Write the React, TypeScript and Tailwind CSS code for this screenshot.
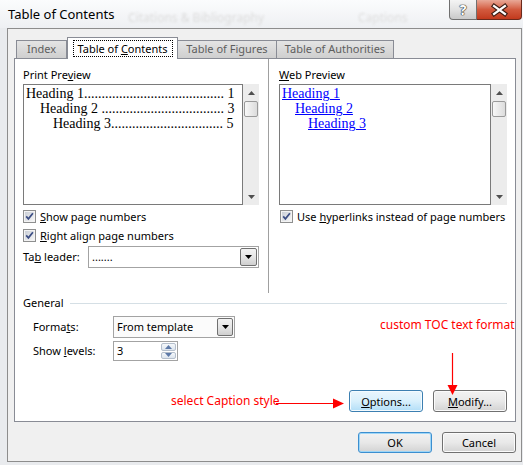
import React from "react";

const ui = "font-['Noto_Sans',sans-serif]";
const serif = "font-['Liberation_Serif',serif]";

function Check() {
  return (
    <svg width="13" height="13" viewBox="0 0 13 13" className="shrink-0">
      <defs>
        <linearGradient id="cbfill" x1="0" y1="0" x2="1" y2="1">
          <stop offset="0" stopColor="#c9ced6" />
          <stop offset="1" stopColor="#f6f6f6" />
        </linearGradient>
      </defs>
      <rect x="0.5" y="0.5" width="12" height="12" fill="#f3f3f3" stroke="#8e8f8f" />
      <rect x="2" y="2" width="9" height="9" fill="url(#cbfill)" />
      <path d="M3.2 6.4 L5.4 8.9 L9.9 3.2" fill="none" stroke="#3b4d84" strokeWidth="1.7" />
    </svg>
  );
}

function TriDown({ color = "#000" }: { color?: string }) {
  return (
    <svg width="7" height="4" viewBox="0 0 7 4">
      <path d="M0 0 L7 0 L3.5 4Z" fill={color} />
    </svg>
  );
}

function TriUp({ color = "#000" }: { color?: string }) {
  return (
    <svg width="7" height="4" viewBox="0 0 7 4">
      <path d="M3.5 0 L7 4 L0 4Z" fill={color} />
    </svg>
  );
}

function VScroll() {
  return (
    <div className="w-[16px] h-full bg-[#ececec] flex flex-col items-center">
      <div className="h-[17px] flex items-center justify-center">
        <TriUp color="#505050" />
      </div>
      <div className="w-[14px] h-[16px] rounded-[2px] border border-[#9a9a9a] bg-gradient-to-r from-[#f8f8f8] to-[#dcdcdc]" />
      <div className="flex-1" />
      <div className="h-[17px] flex items-center justify-center">
        <TriDown color="#505050" />
      </div>
    </div>
  );
}

function ArrowBtn({ w }: { w: string }) {
  return (
    <div
      className={`${w} h-full rounded-[2px] border border-[#707070] bg-gradient-to-b from-[#f3f3f3] via-[#e6e6e6] to-[#cfcfcf] flex items-center justify-center`}
    >
      <TriDown />
    </div>
  );
}

function Btn({
  children,
  kind = "normal",
  h = "h-[22px]",
}: {
  children: React.ReactNode;
  kind?: "normal" | "hot" | "default";
  h?: string;
}) {
  const look =
    kind === "hot"
      ? "border-[#3c7fb1] bg-gradient-to-b from-[#eaf6fd] via-[#d9f0fc] to-[#b2def7] shadow-[inset_0_0_0_1px_#f4fbff]"
      : kind === "default"
      ? "border-[#3c8fd0] bg-gradient-to-b from-[#f2f2f2] via-[#e8e8e8] to-[#d3d3d3] shadow-[inset_0_0_0_1px_#9ed6f7]"
      : "border-[#707070] bg-gradient-to-b from-[#f2f2f2] via-[#e9e9e9] to-[#d3d3d3] shadow-[inset_0_0_0_1px_#fbfbfb]";
  return (
    <div
      className={`w-[74px] ${h} rounded-[3px] border ${look} flex items-center justify-center text-[11px] leading-none`}
    >
      {children}
    </div>
  );
}

export default function App() {
  return (
    <div className={`relative w-[523px] h-[465px] overflow-hidden bg-[#e9ebee] text-black text-[11px] ${ui}`}>
      {/* title bar */}
      <div className="relative h-[28px] bg-gradient-to-b from-[#fbfcfd] to-[#eef0f3] flex">
        <div className="absolute left-[128px] top-[9px] text-[12px] text-[#dcdcdc] blur-[1px]">
          Citations &amp; Bibliography
        </div>
        <div className="absolute left-[358px] top-[9px] text-[12px] text-[#dedede] blur-[1px]">Captions</div>
        <span className="relative pl-[8px] pt-[5px] text-[13px] leading-[18px]">Table of Contents</span>
        <div className="ml-auto mr-[1px] flex h-[20px]">
          <div className="w-[28px] h-full rounded-bl-[4px] border border-t-0 border-[#707070] bg-gradient-to-b from-[#f4f4f4] via-[#e2e2e2] to-[#c9c9c9] flex items-center justify-center">
            <span className="text-[14px] font-bold leading-none text-white [text-shadow:0_0_1px_#222,0_0_1px_#222,0_0_1px_#222]">
              ?
            </span>
          </div>
          <div className="w-[45px] h-full rounded-br-[4px] border border-t-0 border-l-0 border-[#6b2a1c] bg-gradient-to-b from-[#e8a897] via-[#d25a3e] to-[#c2391c] flex items-center justify-center">
            <svg width="45" height="20" viewBox="0 0 45 20">
              <path d="M17.5 6 L28.5 14 M28.5 6 L17.5 14" stroke="#3b1b12" strokeWidth="4.6" strokeLinecap="square" />
              <path d="M17.5 6 L28.5 14 M28.5 6 L17.5 14" stroke="#ffffff" strokeWidth="2.4" strokeLinecap="square" />
            </svg>
          </div>
        </div>
      </div>

      {/* dialog body */}
      <div className="ml-[7px] w-[515px] h-[434px] border border-[#8d8d8d] bg-[#f0f0f0] pl-[6px] pr-[5px] pt-[8px]">
        {/* tabs */}
        <div className="h-[21px] flex items-end pl-[2px]">
          <div className="w-[51px] h-[18px] border border-b-0 border-[#898c95] bg-gradient-to-b from-[#e4e4e4] to-[#cfcfcf] text-[#5e5e5e] flex items-center justify-center">
            Index
          </div>
          <div className="relative z-10 -mb-[1px] w-[111px] h-[22px] border border-b-0 border-[#898c95] bg-white flex items-center justify-center">
            <span className="px-[4px] py-[1px] border border-dotted border-black leading-[13px]">
              Table of <span className="underline">C</span>ontents
            </span>
          </div>
          <div className="w-[99px] h-[18px] border border-b-0 border-l-0 border-[#898c95] bg-gradient-to-b from-[#e4e4e4] to-[#cfcfcf] text-[#5e5e5e] flex items-center justify-center">
            Table of Figures
          </div>
          <div className="w-[117px] h-[18px] border border-b-0 border-l-0 border-[#898c95] bg-gradient-to-b from-[#e4e4e4] to-[#cfcfcf] text-[#5e5e5e] flex items-center justify-center">
            Table of Authorities
          </div>
        </div>

        {/* panel */}
        <div className="w-[502px] h-[364px] border border-[#898c95] bg-white flex flex-col pl-[8px] pr-[8px]">
          {/* previews */}
          <div className="h-[234px] flex">
            <div className="w-[236px] pt-[8px] flex flex-col">
              <div className="h-[16px] leading-[16px] mb-[1px]">
                Print Pre<span className="underline">v</span>iew
              </div>
              <div className="h-[121px] flex">
                <div className={`w-[220px] h-full border border-[#7a7a7a] pl-[2px] pt-[1px] text-[14px] leading-[15px] whitespace-nowrap ${serif}`}>
                  <div>Heading 1........................................ 1</div>
                  <div className="pl-[14px]">Heading 2 ................................... 3</div>
                  <div className="pl-[27px]">Heading 3................................ 5</div>
                </div>
                <VScroll />
              </div>
              <div className="mt-[5px] h-[13px] flex items-center gap-[4px] leading-[13px]">
                <Check />
                <span>
                  <span className="underline">S</span>how page numbers
                </span>
              </div>
              <div className="mt-[6px] h-[13px] flex items-center gap-[4px] leading-[13px]">
                <Check />
                <span>
                  <span className="underline">R</span>ight align page numbers
                </span>
              </div>
              <div className="mt-[4px] h-[22px] flex items-center">
                <span className="w-[65px]">
                  Ta<span className="underline">b</span> leader:
                </span>
                <div className="w-[171px] h-full border border-[#a3a3a3] bg-white flex items-center p-[1px] pl-[3px]">
                  <span className="flex-1">.......</span>
                  <ArrowBtn w="w-[17px]" />
                </div>
              </div>
            </div>

            <div className="ml-[9px] w-px h-full bg-[#a0a0a0]" />

            <div className="ml-[10px] w-[228px] pt-[8px] flex flex-col">
              <div className="h-[16px] leading-[16px] mb-[1px]">
                <span className="underline">W</span>eb Preview
              </div>
              <div className="h-[121px] flex">
                <div className={`w-[212px] h-full border border-[#7a7a7a] pl-[2px] pt-[1px] text-[14px] leading-[15px] text-[#0000ff] ${serif}`}>
                  <div>
                    <span className="underline">Heading 1</span>
                  </div>
                  <div className="pl-[13px]">
                    <span className="underline">Heading 2</span>
                  </div>
                  <div className="pl-[26px]">
                    <span className="underline">Heading 3</span>
                  </div>
                </div>
                <VScroll />
              </div>
              <div className="mt-[5px] h-[13px] flex items-center gap-[4px] leading-[13px] pl-[1px]">
                <Check />
                <span>
                  Use <span className="underline">h</span>yperlinks instead of page numbers
                </span>
              </div>
            </div>
          </div>

          {/* general */}
          <div className="h-[20px] flex items-center">
            <span>General</span>
            <div className="ml-[6px] flex-1 h-px bg-[#d5dfe5]" />
          </div>
          <div className="mt-[3px] h-[22px] flex items-center pl-[10px]">
            <span className="w-[80px]">
              Forma<span className="underline">t</span>s:
            </span>
            <div className="w-[122px] h-full border border-[#a3a3a3] bg-[#fbfbfb] flex items-center p-[1px] pl-[3px]">
              <span className="flex-1">From template</span>
              <ArrowBtn w="w-[16px]" />
            </div>
          </div>
          <div className="mt-[3px] h-[20px] flex items-center pl-[10px]">
            <span className="w-[80px]">
              Show <span className="underline">l</span>evels:
            </span>
            <div className="w-[65px] h-full border border-[#a3a3a3] bg-white flex items-center pl-[3px]">
              <span className="flex-1">3</span>
              <div className="w-[16px] h-full flex flex-col p-[1px] pl-0 gap-px">
                <div className="flex-1 rounded-[2px] border border-[#b5bfcc] bg-gradient-to-b from-[#f5f8fb] to-[#dde5ee] flex items-center justify-center">
                  <TriUp color="#5d79a8" />
                </div>
                <div className="flex-1 rounded-[2px] border border-[#b5bfcc] bg-gradient-to-b from-[#f5f8fb] to-[#dde5ee] flex items-center justify-center">
                  <TriDown color="#5d79a8" />
                </div>
              </div>
            </div>
          </div>

          <div className="mt-[29px] flex justify-end gap-[10px]">
            <Btn kind="hot">
              <span>
                <span className="underline">O</span>ptions...
              </span>
            </Btn>
            <Btn>
              <span>
                <span className="underline">M</span>odify...
              </span>
            </Btn>
          </div>
        </div>

        {/* OK / Cancel */}
        <div className="mt-[10px] flex justify-end gap-[10px]">
          <Btn kind="default" h="h-[21px]">OK</Btn>
          <Btn h="h-[21px]">Cancel</Btn>
        </div>
      </div>

      {/* red annotations */}
      <div className="absolute left-[380px] top-[318px] text-[12px] leading-[14px] text-[#ff0000] whitespace-nowrap">
        custom TOC text format
      </div>
      <div className="absolute left-[171px] top-[394px] text-[12px] leading-[14px] text-[#ff0000] whitespace-nowrap">
        select Caption style
      </div>
      <svg className="absolute left-0 top-0 pointer-events-none" width="523" height="465" viewBox="0 0 523 465">
        <path d="M276 403.5 L336 403.5" stroke="#ff0000" strokeWidth="1.2" />
        <path d="M333 398.5 L344 403.5 L333 408.5Z" fill="#ff0000" />
        <path d="M452.5 353 L452.5 387" stroke="#ff0000" strokeWidth="1.2" />
        <path d="M447.5 385 L457.5 385 L452.5 395Z" fill="#ff0000" />
      </svg>
    </div>
  );
}
